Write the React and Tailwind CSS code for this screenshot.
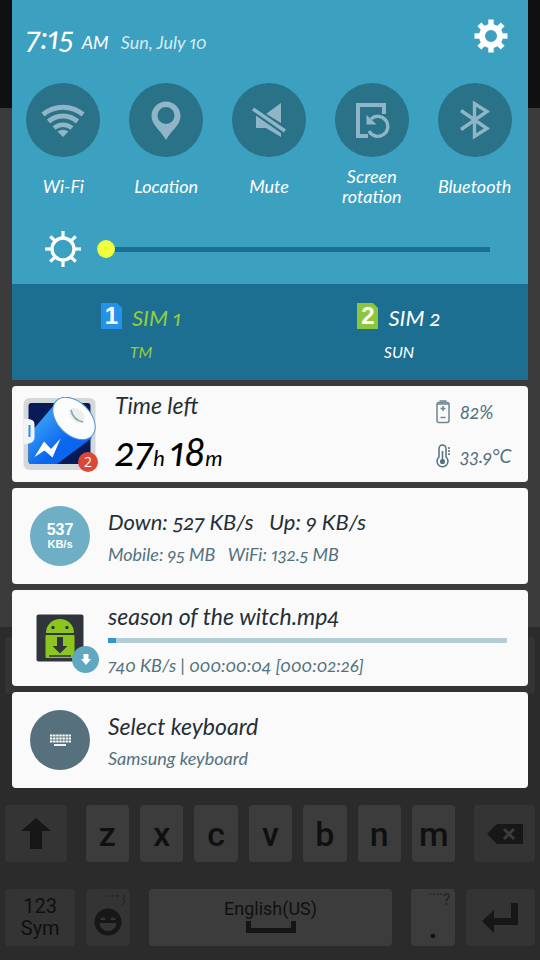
import React from "react";

const script = "font-['Lato','Liberation_Sans',sans-serif] italic oldstyle-nums proportional-nums";

function WifiIcon() {
  return (
    <svg viewBox="0 0 44 34" className="w-11 h-[34px]" fill="none" stroke="#8fb5c7" strokeWidth="5" aria-hidden="true">
      <path d="M2 11.500a31 31 0 0 1 40 0" />
      <path d="M7.500 18.500a22 22 0 0 1 29 0" />
      <path d="M13 25a14 14 0 0 1 18 0" strokeWidth="4.500" />
      <path d="M16.500 28.500a10 10 0 0 1 11 0L22 34z" fill="#8fb5c7" stroke="none" />
    </svg>
  );
}

function LocationIcon() {
  return (
    <svg viewBox="0 0 30 39" className="w-[30px] h-[39px]" fill="#8fb5c7" aria-hidden="true">
      <path fillRule="evenodd" d="M15 0.500C7 0.500 0.500 7 0.500 15c0 9 9 14 14.500 24 5.500-10 14.500-15 14.500-24C29.500 7 23 0.500 15 0.500zM15 6a8.500 8.500 0 1 1 0 17a8.500 8.500 0 0 1 0-17z" />
    </svg>
  );
}

function MuteIcon() {
  return (
    <svg viewBox="0 0 34 36" className="w-[34px] h-9" fill="#8fb5c7" aria-hidden="true">
      <path d="M14 12L29 1V21z" />
      <path d="M4 13.500L29 31V35L14 26H4z" />
      <path d="M1 7L33 29" stroke="#297288" strokeWidth="7" />
      <path d="M1 7L33 29" stroke="#8fb5c7" strokeWidth="3.600" />
    </svg>
  );
}

function RotationIcon() {
  return (
    <svg viewBox="0 0 36 38" className="w-9 h-[38px]" fill="none" stroke="#8fb5c7" strokeWidth="4" aria-hidden="true">
      <path d="M30 13V4H4v31h10" />
      <path d="M17 18A10 10 0 1 1 15 30" strokeWidth="3.400" />
      <path d="M12.500 14v9.500h10z" fill="#8fb5c7" stroke="none" />
    </svg>
  );
}

function BluetoothIcon() {
  return (
    <svg viewBox="0 0 32 40" className="w-8 h-10" fill="none" stroke="#8fb5c7" strokeWidth="3.400" aria-hidden="true">
      <path d="M2 10.500L28 28.500L15.500 36.500V3.500L28 11.500L2 29.500" />
    </svg>
  );
}

function GearIcon() {
  return (
    <svg viewBox="-17 -17 34 34" className="w-[34px] h-[34px]" aria-hidden="true">
      <circle r="9" fill="none" stroke="#fff" strokeWidth="6" />
      {[0, 45, 90, 135, 180, 225, 270, 315].map((a) => (
        <rect key={a} x="-2.700" y="-16.500" width="5.400" height="7" fill="#fff" transform={`rotate(${a})`} />
      ))}
    </svg>
  );
}

function BrightnessIcon() {
  return (
    <svg viewBox="-18 -18 36 36" className="w-9 h-9" aria-hidden="true">
      <circle r="11" fill="none" stroke="#fff" strokeWidth="3.400" />
      {[0, 45, 90, 135, 180, 225, 270, 315].map((a) => (
        <rect key={a} x="-1.600" y="-18" width="3.200" height="7" fill="#fff" transform={`rotate(${a})`} />
      ))}
    </svg>
  );
}

function BatteryAppIcon() {
  return (
    <svg viewBox="0 0 75 75" className="w-[75px] h-[75px]" aria-hidden="true">
      <defs>
        <linearGradient id="battery-body" x1="0" y1="0" x2="1" y2="1">
          <stop offset="0.25" stopColor="#3296f6" />
          <stop offset="0.6" stopColor="#0a66ee" />
        </linearGradient>
      </defs>
      <rect x="0.500" y="1" width="72" height="72" rx="6" fill="#d3d9db" />
      <rect x="5.500" y="6" width="62" height="61" rx="3" fill="#081a57" />
      <path d="M31 8L5.500 38V64q0 3 3 3H34L69 41z" fill="url(#battery-body)" />
      <path d="M0.500 23q0-1 3-1q8 0 8 5v14q0 5-8 6h-3z" fill="#f1f4f5" />
      <path d="M6.500 28v12" stroke="#2a8cf4" strokeWidth="2" />
      <ellipse cx="51" cy="21.500" rx="25" ry="16.500" transform="rotate(45 51 21.500)" fill="#fbfcfc" stroke="#4b92cc" strokeWidth="1" />
      <ellipse cx="54" cy="18.500" rx="9" ry="6" transform="rotate(45 54 18.500)" fill="#eceff0" />
      <path d="M48 13q2 10 12 12" fill="none" stroke="#8ca4a8" strokeWidth="1.500" />
      <path d="M11.500 60L21 44.500l7 7.500L37.500 41.500L29.500 60.500l-8-7z" fill="#fff" />
    </svg>
  );
}

function Toggle({ label, children }) {
  return (
    <button type="button" className="flex flex-col items-center gap-[9px]">
      <span className="flex size-[74px] items-center justify-center rounded-full bg-[#297288]">{children}</span>
      <span className="flex h-10 max-w-20 items-center text-center text-[18px] leading-5">{label}</span>
    </button>
  );
}

function SimButton({ number, name, carrier, chip, tone }) {
  return (
    <button type="button" className={`flex flex-col items-center gap-2 ${tone}`}>
      <span className="flex items-center gap-2.5">
        <span className="relative flex h-[26px] w-[21px] items-center justify-center">
          <svg viewBox="0 0 21 26" className="absolute inset-0 h-full w-full" aria-hidden="true">
            <path d="M0 0H16L21 5V26H0z" fill={chip} />
          </svg>
          <span className="relative font-['Liberation_Sans',sans-serif] text-2xl leading-6 font-bold text-white not-italic">{number}</span>
        </span>
        <span className="pt-1 text-[22px] leading-7">{name}</span>
      </span>
      <span className="text-base leading-6">{carrier}</span>
    </button>
  );
}

function Card({ children }) {
  return <article className="flex h-24 items-center rounded bg-[#fafafa] text-[#253036]">{children}</article>;
}

function Key({ className, label, children }) {
  return (
    <button type="button" aria-label={label} className={`flex h-[57px] items-center justify-center rounded ${className}`}>
      {children}
    </button>
  );
}

function Keyboard() {
  const letters = ["z", "x", "c", "v", "b", "n", "m"];
  return (
    <div className="flex flex-col gap-[27px] bg-[#2b2b2b] px-[5px] pt-2.5 pb-3.5 font-['Roboto',sans-serif] text-[#101010]">
      <div className="h-[57px] rounded bg-[#343434]" />
      <div className="h-[57px]" />
      <div className="flex gap-[11px]">
        <Key label="Shift" className="mr-2 flex-[61] bg-[#343434]">
          <svg viewBox="0 0 30 32" className="w-[30px] h-8" fill="#171717" aria-hidden="true">
            <path d="M15 0L30 13H21V31H9V13H0z" />
          </svg>
        </Key>
        {letters.map((l) => (
          <Key key={l} label={l} className="flex-[43] bg-[#3c3c3c]">
            <span className="text-[34px] leading-10 font-medium">{l}</span>
          </Key>
        ))}
        <Key label="Backspace" className="ml-2 flex-[60] bg-[#343434]">
          <svg viewBox="0 0 36 20" className="w-9 h-5" aria-hidden="true">
            <path d="M0 10L10 0H36V20H10z" fill="#171717" />
            <path d="M17 5L27 15M27 5L17 15" stroke="#3c3c3c" strokeWidth="3" />
          </svg>
        </Key>
      </div>
      <div className="flex gap-[11px]">
        <Key label="Numbers and symbols" className="flex-[70] flex-col bg-[#343434]">
          <span className="text-xl leading-5">123</span>
          <span className="text-xl leading-6">Sym</span>
        </Key>
        <Key label="Emoji" className="relative mr-2 flex-[43] bg-[#343434]">
          <svg viewBox="0 0 28 28" className="mt-2 size-7" aria-hidden="true">
            <circle cx="14" cy="14" r="13.500" fill="#171717" />
            <path d="M6 12q3-6 6 0zM16 12q3-6 6 0z" fill="#343434" />
            <path d="M5.500 15h17a8.500 8 0 0 1-17 0z" fill="#343434" />
          </svg>
          <svg viewBox="0 0 20 14" className="absolute top-1 right-1 w-5 h-3.5" fill="none" stroke="#252525" strokeWidth="1.500" aria-hidden="true">
            <path d="M0 3h3M5 3h3M10 3h3M17 2q3 2 0 4q3 3-1 6" />
          </svg>
        </Key>
        <Key label="Space" className="flex-[242] flex-col bg-[#3c3c3c] pb-1">
          <span className="text-lg leading-5">English(US)</span>
          <svg viewBox="0 0 50 12" className="mt-0.5 w-[50px] h-3" fill="none" stroke="#151515" strokeWidth="5" aria-hidden="true">
            <path d="M2.500 0V9.500H47.500V0" />
          </svg>
        </Key>
        <Key label="Period" className="ml-2 flex-[43] flex-col bg-[#3c3c3c]">
          <span className="self-end pr-1 text-base leading-4 font-medium text-[#272727]">¨¨?</span>
          <span className="text-[34px] leading-9 font-medium">.</span>
        </Key>
        <Key label="Enter" className="flex-[69] bg-[#343434]">
          <svg viewBox="0 0 36 30" className="w-9 h-[30px]" fill="#171717" aria-hidden="true">
            <path d="M0 18L12 7V15H29V0H36V22H12V30z" />
          </svg>
        </Key>
      </div>
    </div>
  );
}

export default function App() {
  return (
    <div className="relative min-h-screen bg-[#3b3b3b]">
      <div className="absolute inset-0 flex flex-col justify-between">
        <div className="h-27 bg-[#101010]" />
        <Keyboard />
      </div>

      <main className={`relative flex flex-col gap-1.5 px-3 ${script}`}>
        <section className="text-white">
          <div className="flex h-[284px] flex-col bg-[#3ca0c0]">
            <header className="flex h-[83px] items-center justify-between pr-5 pb-2 pl-3.5">
              <div className="flex items-baseline">
                <span className="text-[31px] leading-9">7:15</span>
                <span className="ml-2 text-[18px]">AM</span>
                <span className="ml-3 text-[18px] text-[#d4eaf2]">Sun, July 10</span>
              </div>
              <button type="button" aria-label="Settings" className="mb-1">
                <GearIcon />
              </button>
            </header>
            <div className="grid grid-cols-5 pr-0.5">
              <Toggle label="Wi-Fi"><WifiIcon /></Toggle>
              <Toggle label="Location"><LocationIcon /></Toggle>
              <Toggle label="Mute"><MuteIcon /></Toggle>
              <Toggle label="Screen rotation"><RotationIcon /></Toggle>
              <Toggle label="Bluetooth"><BluetoothIcon /></Toggle>
            </div>
            <label className="mt-[25px] flex items-center gap-4 pr-[38px] pl-[33px]">
              <BrightnessIcon />
              <input
                type="range"
                min="0"
                max="100"
                defaultValue="0"
                aria-label="Brightness"
                className="h-[5px] min-w-0 flex-1 appearance-none bg-[#1c6f91] [&::-webkit-slider-thumb]:size-[18px] [&::-webkit-slider-thumb]:appearance-none [&::-webkit-slider-thumb]:rounded-full [&::-webkit-slider-thumb]:bg-[#f0ff3c]"
              />
            </label>
          </div>
          <div className="grid h-24 grid-cols-2 items-start bg-[#1c6f91] pt-4">
            <SimButton number="1" name="SIM 1" carrier="TM" chip="#2492ea" tone="text-[#96cc3c]" />
            <SimButton number="2" name="SIM 2" carrier="SUN" chip="#8dc63a" tone="text-white" />
          </div>
        </section>

        <Card>
          <div className="relative ml-[11px] shrink-0">
            <BatteryAppIcon />
            <span className="absolute right-0 bottom-0 flex size-5 items-center justify-center rounded-full bg-[#dc4634] font-['Open_Sans',sans-serif] text-sm text-white not-italic lining-nums">2</span>
          </div>
          <div className="ml-[17px] flex-1">
            <h2 className="text-[23px] leading-7">Time left</h2>
            <p className="mt-3 text-[40px] leading-10 text-black">
              27<span className="text-[22px]">h </span>18<span className="text-[22px]">m</span>
            </p>
          </div>
          <div className="flex w-[92px] flex-col gap-5 text-[19px] leading-6 text-[#52727e]">
            <div className="flex items-center gap-2.5">
              <svg viewBox="0 0 14 24" className="w-3.5 h-6" fill="none" stroke="#71878f" strokeWidth="1.500" aria-hidden="true">
                <rect x="1" y="2.500" width="12" height="20" rx="2" />
                <path d="M3.500 1h7M1 4h12M4.500 8.500h5M7 6v5M4.500 17.500h5" />
              </svg>
              <span>82%</span>
            </div>
            <div className="flex items-center gap-2.5">
              <svg viewBox="0 0 14 24" className="w-3.5 h-6" fill="none" stroke="#52727e" strokeWidth="1.500" aria-hidden="true">
                <path d="M3 13V4.500a3.500 3.500 0 0 1 7 0V13a5.500 5.500 0 1 1-7 0zM6.500 7v9M12 4h2M12 7h2M12 10h2" />
                <circle cx="6.500" cy="17.500" r="1.800" fill="#52727e" />
              </svg>
              <span>33.9°C</span>
            </div>
          </div>
        </Card>

        <Card>
          <div className="ml-[18px] flex size-15 shrink-0 flex-col items-center justify-center rounded-full bg-[#6eafc6] font-['Liberation_Sans',sans-serif] font-bold text-white not-italic">
            <span className="text-base leading-4">537</span>
            <span className="text-[11px] leading-3">KB/s</span>
          </div>
          <div className="ml-[18px] pt-1">
            <h2 className="text-[22px] leading-8 whitespace-pre">Down: 527 KB/s   Up: 9 KB/s</h2>
            <p className="text-[18px] leading-8 whitespace-pre text-[#52727e]">Mobile: 95 MB   WiFi: 132.5 MB</p>
          </div>
        </Card>

        <Card>
          <div className="relative ml-6 size-12 shrink-0">
            <svg viewBox="0 0 48 48" className="size-12" aria-hidden="true">
              <rect x="0.500" y="0.500" width="47" height="47" rx="2" fill="#30353c" />
              <path d="M10 19a14 14 0 0 1 28 0z" fill="#8dc51f" />
              <rect x="9.500" y="21" width="29" height="23" rx="1" fill="#8dc51f" />
              <circle cx="17" cy="13.500" r="1.700" fill="#30353c" />
              <circle cx="31" cy="13.500" r="1.700" fill="#30353c" />
              <path d="M21 23h6v9h4.500L24 39.500L16.500 32H21z" fill="#30353c" />
              <path d="M13 42h22" stroke="#30353c" strokeWidth="1.500" />
            </svg>
            <span className="absolute -right-[15px] -bottom-[11px] flex size-[27px] items-center justify-center rounded-full bg-[#5fa8c0]">
              <svg viewBox="0 0 10 11" className="w-2.5 h-[11px]" fill="#fff" aria-hidden="true">
                <path d="M2.500 0h5v5H10L5 11L0 5h2.500z" />
              </svg>
            </span>
          </div>
          <div className="mr-[21px] ml-6 flex-1 pt-1">
            <h2 className="text-[23px] leading-8">season of the witch.mp4</h2>
            <div role="progressbar" aria-label="Download" aria-valuenow={2} aria-valuemin={0} aria-valuemax={100} className="mt-1.5 h-[5px] bg-[#b3cdd7]">
              <div className="h-full w-2 bg-[#2f94cf]" />
            </div>
            <p className="mt-1.5 text-[18px] leading-8 text-[#52727e]">740 KB/s | 000:00:04 [000:02:26]</p>
          </div>
        </Card>

        <Card>
          <div className="ml-[18px] flex size-15 shrink-0 items-center justify-center rounded-full bg-[#56717d]">
            <svg viewBox="0 0 21 12" className="w-[21px] h-3" aria-hidden="true">
              <path d="M0 1.500h21M0 4.500h21M0 7.500h21" stroke="#fff" strokeWidth="2.200" strokeDasharray="2.400 0.700" />
              <path d="M4 11h12" stroke="#fff" strokeWidth="1.800" />
            </svg>
          </div>
          <div className="ml-[18px] pt-1">
            <h2 className="text-[23px] leading-8">Select keyboard</h2>
            <p className="text-[18px] leading-8 text-[#52727e]">Samsung keyboard</p>
          </div>
        </Card>
      </main>
    </div>
  );
}
